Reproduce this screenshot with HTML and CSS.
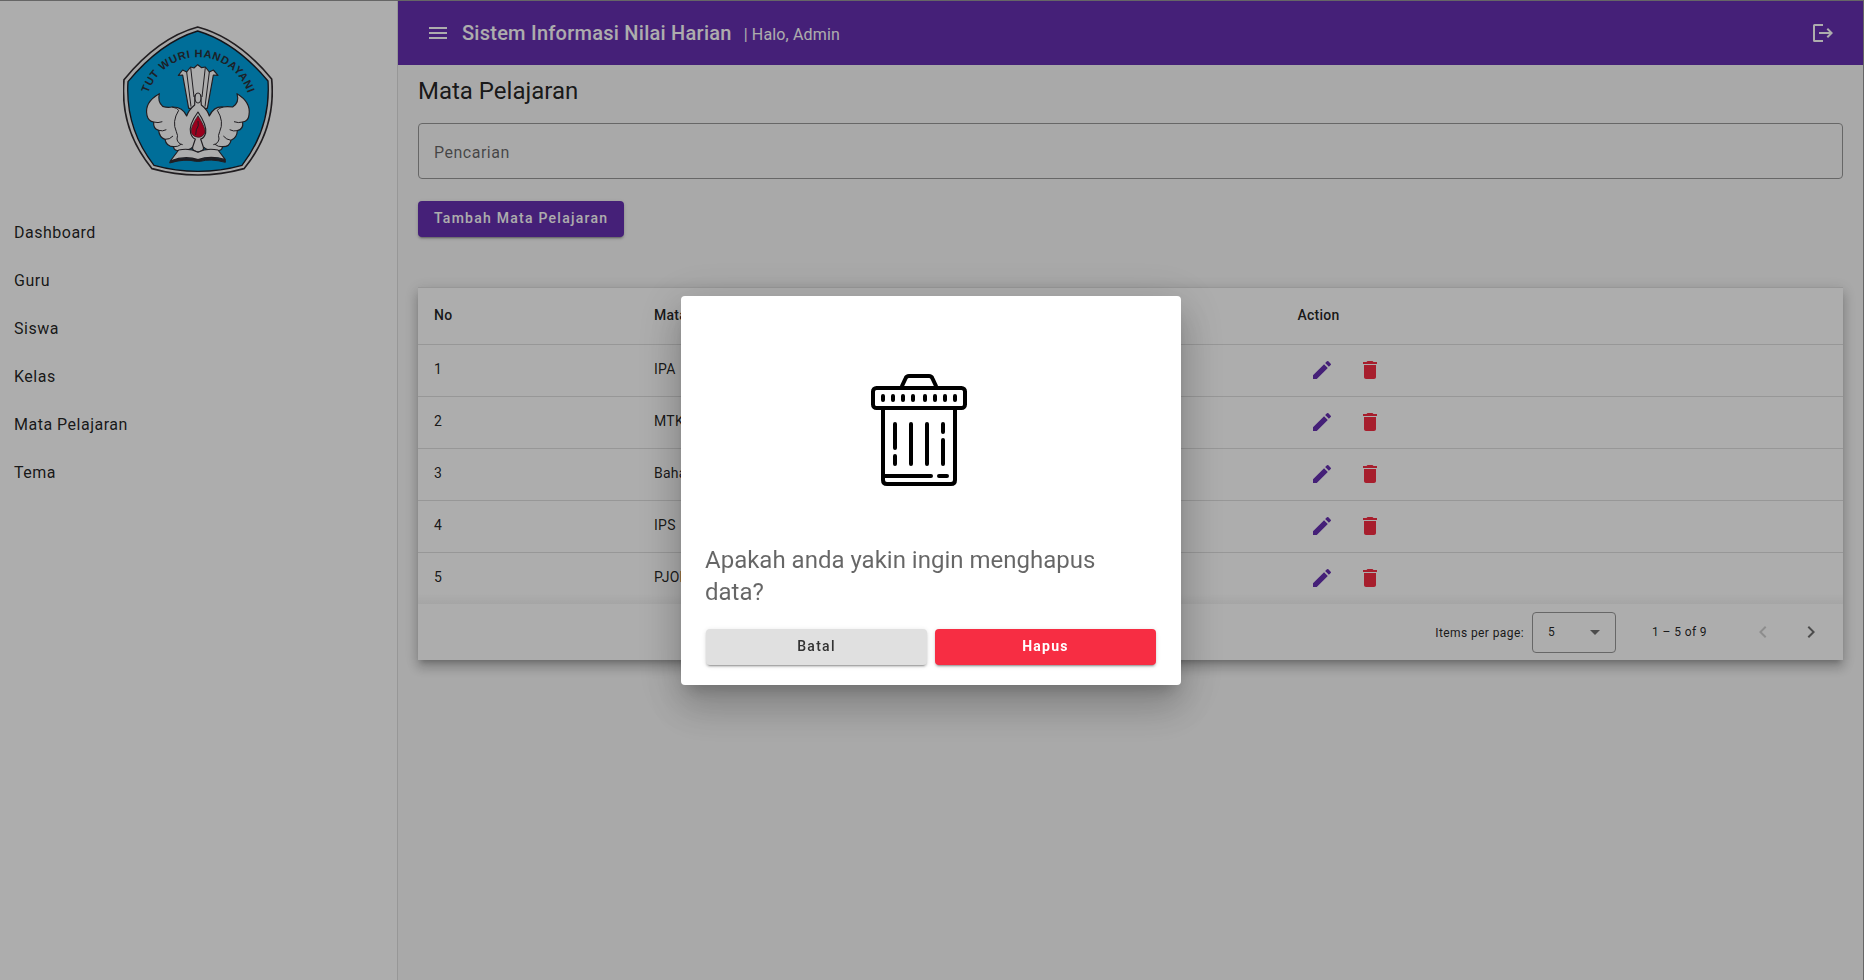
FILE: index.html
```html
<!DOCTYPE html>
<html lang="id">
<head>
<meta charset="utf-8">
<title>Sistem Informasi Nilai Harian</title>
<link rel="stylesheet" href="styles.css">
</head>
<body>
<svg class="defs" aria-hidden="true">
  <symbol id="edit" viewBox="0 0 24 24"><path d="M3 17.25V21h3.75L17.81 9.94l-3.75-3.75L3 17.25zM20.71 7.04a1 1 0 0 0 0-1.41l-2.34-2.34a1 1 0 0 0-1.41 0l-1.83 1.83 3.75 3.75 1.83-1.83z"/></symbol>
  <symbol id="delete" viewBox="0 0 24 24"><path d="M6 19c0 1.1.9 2 2 2h8c1.1 0 2-.9 2-2V7H6v12zM19 4h-3.5l-1-1h-5l-1 1H5v2h14V4z"/></symbol>
</svg>
<div class="app">
  <aside class="sidebar">
    <svg class="logo" viewBox="40 33 450 450">
      <path class="rim" d="M264 36Q384 68 486 192Q500 343 403 461Q335 480 265 480Q195 480 127 461Q30 343 43 194Q146 68 264 36Z"/>
      <path class="field" d="M264 48Q378 82 475 198Q484 339 397 451Q333 469 265 469Q198 469 133 451Q46 339 55 200Q152 82 264 48Z"/>
      <path id="arc" fill="none" d="M115 235A158 158 0 0 1 415 235"/>
      <text class="motto"><textPath href="#arc" textLength="394" lengthAdjust="spacing">TUT WURI HANDAYANI</textPath></text>
      <g class="line">
        <path d="M206 181L219 165L231 171L243 156L253 159L264 149L276 158L287 156L299 171L311 165L325 181L311 180L293 280H237L219 180Z"/>
        <path d="M231 171L244 275M243 157L253 246M287 157L277 246M299 171L286 275" fill="none"/>
        <path d="M149 236Q103 262 112 301Q116 319 132 321Q130 342 147 346Q149 367 166 373Q170 395 192 395Q190 409 218 406Q240 406 248 397L265 404L283 397Q291 406 312 406Q340 409 338 395Q360 396 364 376Q382 368 383 347Q402 343 399 321Q417 318 418 299Q424 261 382 236Q390 263 369 276Q352 274 341 276Q313 273 299 303Q294 285 275 270L273 242Q265 229 256 242L255 270Q237 285 231 303Q219 275 187 276Q173 279 159 274Q143 260 149 236Z"/>
        <path d="M132 321Q145 325 158 320M147 346Q159 350 170 344M166 373Q180 374 190 363M192 395Q205 396 214 388M187 276Q204 279 207 286Q186 320 200 350Q206 362 202 372Q204 386 219 389M399 321Q386 325 373 320M383 347Q371 350 360 344M364 376Q350 374 341 363M338 395Q325 396 316 388M341 276Q326 279 323 286Q344 320 330 350Q324 362 328 372Q326 386 311 389" fill="none"/>
        <ellipse cx="265" cy="249" rx="9" ry="15"/>
        <path d="M265 291Q236 330 243 355Q249 371 257 372L249 396Q246 408 265 411Q285 408 281 396L273 372Q283 370 288 354Q292 331 265 291Z"/>
        <path class="flame" d="M265 302Q240 339 245 354Q253 367 265 367Q279 367 286 353Q289 340 265 302Z"/>
        <path d="M265 318Q269 334 260 344L258 360" fill="none"/>
        <path class="book" d="M207 405Q240 398 265 412Q291 398 325 405L347 434Q303 420 265 434Q226 420 182 438Z"/>
        <path class="spine" d="M182 438Q226 425 265 435Q303 424 347 436V442Q303 430 272 439H258Q226 430 180 444Z"/>
      </g>
    </svg>
    <nav class="menu">
      <a>Dashboard</a><a>Guru</a><a>Siswa</a><a>Kelas</a><a>Mata Pelajaran</a><a>Tema</a>
    </nav>
  </aside>
  <main class="content">
    <header class="toolbar">
      <span class="icon-btn"><svg class="icon" viewBox="0 0 24 24"><path d="M3 18h18v-2H3v2zm0-5h18v-2H3v2zm0-7v2h18V6H3z"/></svg></span>
      <span class="brand">Sistem Informasi Nilai Harian</span>
      <span class="hello">| Halo, Admin</span>
      <span class="icon-btn exit"><svg class="icon" viewBox="0 0 24 24"><path d="M2 4.500V19.500Q2 21 3.500 21H12V19H4V5H12V3H3.500Q2 3 2 4.500zM8 11V13H18.200L15.600 15.600L17 17L22 12L17 7L15.600 8.400L18.200 11z"/></svg></span>
    </header>
    <section class="page">
      <h1>Mata Pelajaran</h1>
      <div class="search">Pencarian</div>
      <button class="btn primary">Tambah Mata Pelajaran</button>
      <div class="card">
        <div class="row head"><span>No</span><span>Mata Pelajaran</span><span>Action</span></div>
        <div class="row"><span>1</span><span>IPA</span><span class="actions"><svg class="edit"><use href="#edit"/></svg><svg class="del"><use href="#delete"/></svg></span></div>
        <div class="row"><span>2</span><span>MTK</span><span class="actions"><svg class="edit"><use href="#edit"/></svg><svg class="del"><use href="#delete"/></svg></span></div>
        <div class="row"><span>3</span><span>Bahasa</span><span class="actions"><svg class="edit"><use href="#edit"/></svg><svg class="del"><use href="#delete"/></svg></span></div>
        <div class="row"><span>4</span><span>IPS</span><span class="actions"><svg class="edit"><use href="#edit"/></svg><svg class="del"><use href="#delete"/></svg></span></div>
        <div class="row last"><span>5</span><span>PJOK</span><span class="actions"><svg class="edit"><use href="#edit"/></svg><svg class="del"><use href="#delete"/></svg></span></div>
        <div class="pager">
          <span class="per">Items per page:</span>
          <span class="select">5<svg width="10" height="5" viewBox="0 0 10 5"><path d="M0 0H10L5 5Z"/></svg></span>
          <span class="range">1 – 5 of 9</span>
          <span class="icon-btn off"><svg class="chev" viewBox="0 0 24 24"><path d="M15.410 7.410L14 6l-6 6 6 6 1.410-1.410L10.830 12z"/></svg></span>
          <span class="icon-btn"><svg class="chev" viewBox="0 0 24 24"><path d="M10 6L8.590 7.410 13.170 12l-4.580 4.590L10 18l6-6z"/></svg></span>
        </div>
      </div>
    </section>
  </main>
</div>
<div class="backdrop">
  <div class="dialog">
    <svg class="bin" width="96" height="112" viewBox="0 0 96 112">
      <path d="M31 12L34.500 4.500Q35.500 2 38 2H58Q60.500 2 61.500 4.500L65 12"/>
      <rect x="2" y="14" width="92" height="20" rx="3.500"/>
      <path d="M12 35V106Q12 110 16 110H80Q84 110 84 106V35M12 102H60M68 102H76"/>
      <path d="M12 22V26M22 22V26M32 22V26M42 22V26M54 22V26M64 22V26M74 22V26M84 22V26M24 50V74M24 82V90M40 50V90M56 50V90M72 50V58M72 66V90"/>
    </svg>
    <p>Apakah anda yakin ingin menghapus data?</p>
    <div class="choices"><button class="btn cancel">Batal</button><button class="btn danger">Hapus</button></div>
  </div>
</div>
</body>
</html>
```
FILE: styles.css
```css
* { box-sizing: border-box; }
body {
  margin: 0;
  font-family: Roboto, "Liberation Sans", sans-serif;
  color: rgba(0, 0, 0, .87);
  overflow: hidden;
}
.defs { display: none; }
.app {
  display: flex;
  height: 980px;
  border-top: 1px solid #979797;
  border-right: 1px solid #979797;
  background: #fafafa;
}
.sidebar {
  width: 398px;
  flex: none;
  padding-top: 25px;
  background: #fff;
  border-right: 1px solid #dfdfdf;
}
.logo { display: block; width: 150px; height: 150px; margin-left: 123px; }
.rim { fill: #f6f6f6; stroke: #312c30; stroke-width: 5; }
.field { fill: #00a2e2; stroke: #1c1c24; stroke-width: 4; }
.motto { font: bold 33px "Liberation Sans", sans-serif; fill: #2b3038; }
.line { fill: #fff; stroke: #302c32; stroke-width: 3.5; stroke-linejoin: round; }
.line path[fill="none"] { stroke-width: 3; }
.line .flame { fill: #e4002b; stroke-width: 2; }
.line .spine { fill: #302c32; stroke-width: 3; }
.menu { display: flex; flex-direction: column; margin-top: 33px; }
.menu a {
  height: 48px;
  padding-left: 14px;
  line-height: 48px;
  font-size: 16px;
  letter-spacing: .5px;
}
.content { flex: 1; min-width: 0; }
.toolbar {
  display: flex;
  align-items: center;
  height: 64px;
  padding: 0 16px;
  background: #6630b1;
  color: #fff;
}
.icon-btn { display: flex; align-items: center; justify-content: center; width: 48px; height: 48px; }
.icon { width: 24px; height: 24px; fill: currentColor; }
.exit { margin-left: auto; }
.brand { font-size: 20px; font-weight: 500; letter-spacing: .25px; line-height: 32px; }
.hello { margin-left: 12px; font-size: 16px; line-height: 32px; letter-spacing: .15px; padding-top: 3px; }
.page { padding: 10px 20px 0; }
h1 { margin: 0; font-size: 24px; font-weight: 400; line-height: 32px; }
.search {
  height: 56px;
  margin-top: 16px;
  padding-left: 15px;
  border: 1px solid #999;
  border-radius: 4px;
  font-size: 16px;
  line-height: 58px;
  letter-spacing: .5px;
  color: rgba(0, 0, 0, .6);
}
.btn {
  display: block;
  height: 36px;
  padding: 0 16px 2px;
  border: 0;
  border-radius: 4px;
  font: 500 14px/34px Roboto, sans-serif;
  letter-spacing: 1.25px;
  white-space: nowrap;
  box-shadow: 0 3px 1px -2px rgba(0, 0, 0, .2), 0 2px 2px rgba(0, 0, 0, .14), 0 1px 5px rgba(0, 0, 0, .12);
}
.primary { margin-top: 22px; width: 206px; background: #6630b1; color: #fff; }
.card {
  margin-top: 50px;
  background: #fff;
  border-top: 1px solid #dfdfdf;
  box-shadow: 0 5px 5px -3px rgba(0, 0, 0, .2), 0 8px 10px 1px rgba(0, 0, 0, .14), 0 3px 14px 2px rgba(0, 0, 0, .12);
}
.row {
  display: grid;
  grid-template-columns: 220px 643.5px 1fr;
  align-items: center;
  height: 52px;
  padding: 0 16px;
  border-bottom: 1px solid #dfdfdf;
  font-size: 14px;
  line-height: 20px;
  letter-spacing: .25px;
}
.row > span:not(.actions) { padding-bottom: 4px; }
.row.head { height: 57px; font-weight: 500; }
.row.head > span { padding-bottom: 2px; }
.row.last { height: 51px; border-bottom: 0; background: linear-gradient(#fff 80%, #f4f4f4); }
.actions { display: flex; gap: 24px; padding: 0 0 2px 12px; }
.actions svg { width: 24px; height: 24px; }
.edit { fill: #6630b1; }
.del { fill: #f72d43; }
.pager {
  display: flex;
  align-items: center;
  justify-content: flex-end;
  height: 56px;
  padding-right: 8px;
  font-size: 12px;
  letter-spacing: .4px;
}
.per { margin-right: 8px; padding-top: 1px; }
.select {
  display: flex;
  align-items: center;
  justify-content: space-between;
  width: 84px;
  height: 41px;
  padding: 0 15px;
  border: 1px solid #999;
  border-radius: 4px;
}
.select svg { fill: #717171; }
.range { margin: 0 32px 0 36px; }
.chev { width: 24px; height: 24px; fill: #717171; }
.off .chev { fill: #d0d0d0; }
.backdrop {
  position: fixed;
  inset: 0;
  display: flex;
  align-items: center;
  justify-content: center;
  background: rgba(0, 0, 0, .32);
}
.dialog {
  width: 500px;
  height: 389px;
  margin: 1px 2px 0 0;
  padding: 78px 24px 20px;
  background: #fff;
  border-radius: 4px;
  box-shadow: 0 11px 15px -7px rgba(0, 0, 0, .2), 0 24px 38px 3px rgba(0, 0, 0, .14), 0 9px 46px 8px rgba(0, 0, 0, .12);
}
.bin {
  display: block;
  margin: 0 166px;
  fill: none;
  stroke: #000;
  stroke-width: 4;
  stroke-linecap: round;
}
.dialog p {
  margin: 58px 0 21px;
  font-size: 24px;
  line-height: 32px;
  color: rgba(0, 0, 0, .6);
}
.choices { display: flex; gap: 8px; padding: 0 1px; }
.choices .btn { width: 221px; }
.cancel { background: #e0e0e0; color: #333; }
.danger { background: #f72d43; color: #fff; font-weight: 700; }
```
